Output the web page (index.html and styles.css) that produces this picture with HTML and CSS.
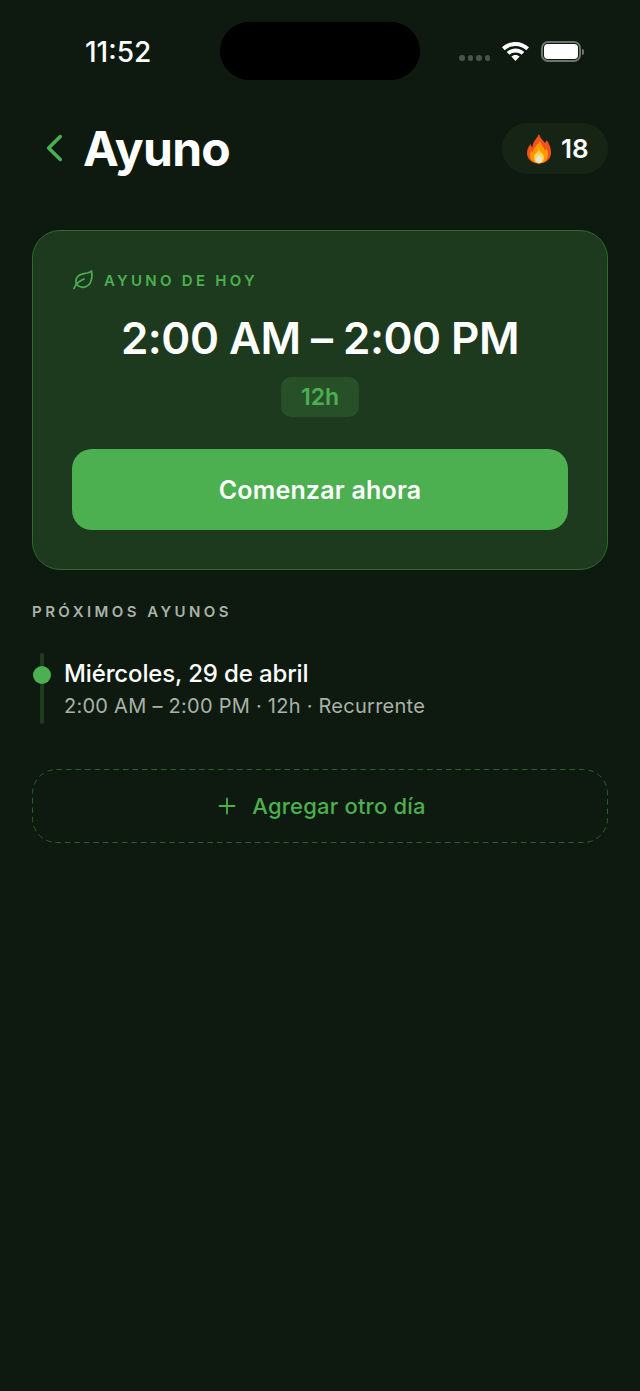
FILE: index.html
```html
<!DOCTYPE html>
<html lang="es">
<head>
<meta charset="utf-8">
<title>Ayuno</title>
<link rel="stylesheet" href="styles.css">
</head>
<body>
<div class="screen">
  <div class="status-bar">
    <div class="time">11:52</div>
    <div class="island"></div>
    <div class="status-icons">
      <div class="signal"><i></i><i></i><i></i><i></i></div>
      <svg class="wifi" width="27" height="19" viewBox="2.9 3.2 22.2 15.6"><path d="M14 3.2c4.300 0 8.200 1.700 11.100 4.400l-2.200 2.300C20.600 7.800 17.500 6.400 14 6.400s-6.600 1.400-8.900 3.500L2.900 7.600C5.800 4.900 9.700 3.200 14 3.200z" fill="#fff"/><path d="M14 8.600c2.800 0 5.300 1.100 7.200 2.800L19 13.700c-1.300-1.200-3.100-1.900-5-1.900s-3.700.7-5 1.900l-2.200-2.300c1.900-1.700 4.400-2.800 7.200-2.800z" fill="#fff"/><path d="M14 13.900c1.300 0 2.500.5 3.400 1.300L14 18.800l-3.400-3.600c.9-.8 2.100-1.300 3.400-1.300z" fill="#fff"/></svg>
      <div class="battery"><div class="battery-body"><div class="battery-fill"></div></div><div class="battery-cap"></div></div>
    </div>
  </div>

  <header class="header">
    <div class="title-group">
      <svg class="back" width="20" height="30" viewBox="0 0 20 30"><path d="M16.300 3.500 4.600 15 16.300 26.500" fill="none" stroke="#4caf50" stroke-width="3.500" stroke-linecap="round" stroke-linejoin="round"/></svg>
      <h1 class="title">Ayuno</h1>
    </div>
    <div class="streak">
      <svg class="flame" width="24" height="30" viewBox="0 0 24 30"><path d="M12 0c1 4 4 6 6 9 1-1 1.500-2 1.500-3 2.500 3 4.500 8 4.500 12.500C24 25 19 29.500 12 29.500S0 25 0 19c0-4 2-7 3.500-9 .3 1.500 1 2.500 2 3C5.500 8 9.500 5 12 0z" fill="#f4511e"/><path d="M13 7c.5 3.500 4 6 5 9.500.6-.5 1-1.200 1.200-2 1.300 2 1.800 4 1.800 6 0 5-4 9-9 9s-9-4-9-8.500c0-2 .8-3.500 1.800-4.500.2 1 .7 1.800 1.500 2.200C6 13 10.500 11.500 13 7z" fill="#ff9800"/><path d="M12 15.500c1 2.500 5 4 5 8 0 3.500-2.200 5.700-5 5.700s-5-2.200-5-5.700c0-3.500 3.500-5 5-8z" fill="#ffd54f"/><path d="M12 21c1 1.300 3 2.300 3 4.500 0 1.800-1.300 3.200-3 3.200s-3-1.400-3-3.200c0-2.200 2-3.200 3-4.500z" fill="#dfe6e3"/></svg>
      <span class="streak-count">18</span>
    </div>
  </header>

  <main class="content">
    <section class="today-card">
      <div class="eyebrow">
        <svg class="leaf" width="22" height="20" viewBox="0 0 22 20"><path d="M2 18.500c1.500-4 5-7.500 10-9.500" fill="none" stroke="#4caf50" stroke-width="1.700" stroke-linecap="round"/><path d="M4.500 14.500C2.500 8 6.500 4.500 11 3.800c3-.5 6.500-.8 8.500-2.800.8 5 .5 10.500-3 14-3.500 3.400-8.500 3-12-.5z" fill="none" stroke="#4caf50" stroke-width="1.700" stroke-linejoin="round"/></svg>
        <span class="eyebrow-text">AYUNO DE HOY</span>
      </div>
      <div class="today-time">2:00 AM – 2:00 PM</div>
      <div class="duration-row"><span class="duration">12h</span></div>
      <button class="primary-btn">Comenzar ahora</button>
    </section>

    <h2 class="section-label">PRÓXIMOS AYUNOS</h2>

    <div class="fast-row">
      <div class="timeline"><div class="line"></div><div class="dot"></div></div>
      <div class="fast-info">
        <div class="fast-date">Miércoles, 29 de abril</div>
        <div class="fast-meta">2:00 AM – 2:00 PM · 12h · Recurrente</div>
      </div>
    </div>

    <button class="add-btn">
      <svg class="dash-outline" width="576" height="74" viewBox="0 0 576 74"><rect x=".5" y=".5" width="575" height="73" rx="24" fill="none" stroke="#2c5f2e" stroke-width="1" stroke-dasharray="5.500 4"/></svg>
      <svg class="plus" width="18" height="18" viewBox="0 0 18 18"><path d="M9 1.500v15M1.500 9h15" stroke="#4caf50" stroke-width="1.800" stroke-linecap="round"/></svg>
      <span>Agregar otro día</span>
    </button>
  </main>
</div>
</body>
</html>
```
FILE: styles.css
```css
* { box-sizing: border-box; margin: 0; padding: 0; }
html, body { height: 100%; }
body {
  background: #0e1a0f;
  color: #fff;
  font-family: Inter, "Liberation Sans", sans-serif;
}
.screen { width: 640px; height: 1391px; overflow: hidden; display: flex; flex-direction: column; }

.status-bar {
  height: 123px;
  padding: 22px 56px 0 85px;
  display: grid;
  grid-template-columns: 135px 200px 1fr;
  align-items: start;
}
.time { font-size: 28px; font-weight: 500; line-height: 60px; height: 58px; }
.island { width: 200px; height: 58px; background: #000; border-radius: 29px; }
.status-icons { display: flex; align-items: flex-start; height: 58px; padding-left: 39px; }
.signal { display: flex; gap: 3px; margin-top: 33px; }
.signal i { display: block; width: 5.500px; height: 5.500px; border-radius: 50%; background: #47544a; }
.wifi { display: block; margin-left: 12px; margin-top: 20px; }
.battery { display: flex; align-items: center; margin-left: 12px; margin-top: 19px; }
.battery-body { width: 40px; height: 21px; border: 2px solid #6b776d; border-radius: 7px; padding: 1px; }
.battery-fill { width: 100%; height: 100%; background: #fff; border-radius: 4px; }
.battery-cap { width: 2px; height: 6px; margin-left: 1px; background: #6b776d; border-radius: 0 2px 2px 0; }

.header {
  height: 51px;
  padding: 0 32px 0 45px;
  display: flex;
  align-items: center;
  justify-content: space-between;
}
.title-group { display: flex; align-items: center; gap: 19px; }
.back { display: block; margin-left: -1px; margin-top: -1px; }
.title { font-size: 48px; font-weight: 700; letter-spacing: -0.72px; line-height: 51px; }
.streak {
  width: 106px;
  height: 51px;
  border-radius: 26px;
  background: #162416;
  display: flex;
  align-items: center;
  padding-left: 25px;
  gap: 10px;
}
.flame { display: block; }
.streak-count { font-size: 26px; font-weight: 600; }

.content { padding: 56px 32px 0; display: flex; flex-direction: column; }

.today-card {
  height: 340px;
  border: 1px solid #2f6a31;
  border-radius: 28px;
  background: #1d3a1e;
  padding: 38px 39px 0;
  display: flex;
  flex-direction: column;
}
.eyebrow { display: flex; align-items: center; gap: 10px; height: 22px; }
.leaf { display: block; }
.eyebrow-text { font-size: 15px; font-weight: 600; color: #4caf50; letter-spacing: 3.270px; }
.today-time { margin-top: 21px; text-align: center; font-size: 44px; font-weight: 600; letter-spacing: -0.52px; line-height: 52px; }
.duration-row { margin-top: 13px; display: flex; justify-content: center; }
.duration {
  width: 78px;
  height: 40px;
  border-radius: 10px;
  background: #285028;
  color: #4caf50;
  font-size: 23px;
  font-weight: 600;
  line-height: 40px;
  text-align: center;
}
.primary-btn {
  margin-top: 32px;
  height: 81px;
  border: 0;
  border-radius: 20px;
  background: #4caf50;
  color: #fff;
  font: 600 25px Inter, "Liberation Sans", sans-serif;
  letter-spacing: 0.2px;
}

.section-label {
  margin-top: 33px;
  font-size: 15px;
  font-weight: 600;
  letter-spacing: 3.450px;
  line-height: 18px;
  color: #a9b2a9;
}

.fast-row { margin-top: 32px; height: 71px; display: flex; gap: 13px; }
.timeline { position: relative; width: 19px; display: flex; justify-content: center; }
.line { width: 4px; height: 71px; border-radius: 2px; background: #1e3a1f; }
.dot {
  position: absolute;
  left: 1px;
  top: 13px;
  width: 18px;
  height: 18px;
  border-radius: 50%;
  background: #4caf50;
}
.fast-date { font-size: 24px; font-weight: 500; letter-spacing: -0.14px; line-height: 30px; margin-top: 6px; }
.fast-meta { font-size: 20px; font-weight: 400; letter-spacing: 0.26px; line-height: 26px; margin-top: 4px; color: #a9b2a9; }

.add-btn {
  position: relative;
  margin-top: 45px;
  height: 74px;
  border: 0;
  background: transparent;
  color: #4caf50;
  display: flex;
  align-items: center;
  justify-content: center;
  gap: 16px;
  padding-left: 4px;
  font: 500 22px Inter, "Liberation Sans", sans-serif;
  letter-spacing: 0.2px;
}
.dash-outline { position: absolute; left: 0; top: 0; }
.plus { display: block; }
```
